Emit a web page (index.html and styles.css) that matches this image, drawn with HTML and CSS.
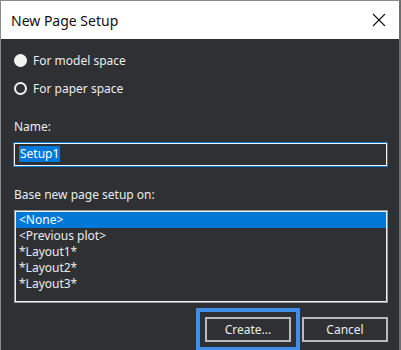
FILE: index.html
```html
<!DOCTYPE html>
<html lang="en">

<head>
    <meta charset="UTF-8">
    <title>New Page Setup</title>
    <link rel="stylesheet" href="styles.css">
</head>

<body>

    <div class="dialog">
        <header class="titlebar">
            <span class="title">New Page Setup</span>
            <svg class="close" width="14" height="14" viewBox="0 0 14 14">
                <path d="M1 1 L13 13 M13 1 L1 13" stroke="#111" stroke-width="1.1" fill="none" />
            </svg>
        </header>

        <main class="content">
            <div class="radio_row">
                <span class="radio checked"></span>
                <span>For model space</span>
            </div>
            <div class="radio_row">
                <span class="radio"></span>
                <span>For paper space</span>
            </div>

            <p class="label name_label">Name:</p>
            <div class="textbox"><span class="selected_text">Setup1</span></div>

            <p class="label base_label">Base new page setup on:</p>
            <ul class="listbox">
                <li class="valgt">&lt;None&gt;</li>
                <li>&lt;Previous plot&gt;</li>
                <li>*Layout1*</li>
                <li>*Layout2*</li>
                <li>*Layout3*</li>
            </ul>

            <div class="buttons">
                <button class="focus">Create...</button>
                <button>Cancel</button>
            </div>
        </main>
    </div>

</body></html>
```
FILE: styles.css
```css
* {
    box-sizing: border-box;
}

body {
    margin: 0;
    background-color: #2e3034;
    font-family: "Noto Sans", "Open Sans", sans-serif;
    font-size: 12px;
    color: #ececec;
}

.dialog {
    width: 401px;
    height: 350px;
    border-left: 1px solid #8a8a8a;
    border-top: 1px solid #8a8a8a;
    border-right: 2px solid #6e6e6e;
    background-color: #2e3034;
    overflow: hidden;
}

.titlebar {
    display: flex;
    justify-content: space-between;
    align-items: center;
    height: 38px;
    padding-left: 10px;
    padding-right: 13px;
    background-color: white;
    color: #111;
}

.title {
    font-size: 14px;
}

.content {
    padding: 7px 11px 0 12px;
}

.radio_row {
    display: flex;
    align-items: center;
    gap: 6px;
    height: 28px;
    padding-left: 1px;
}

.radio {
    width: 13px;
    height: 13px;
    border-radius: 50%;
    border: 2px solid #f2f2f2;
}

.radio.checked {
    background-color: #f2f2f2;
}

.label {
    margin: 0;
    height: 16px;
    line-height: 16px;
    padding-left: 1px;
}

.name_label {
    margin-top: 17px;
}

.textbox {
    margin-top: 7px;
    height: 25px;
    border: 1px solid #0078d7;
    box-shadow: inset 0 0 0 1px #f4f4f4;
    padding: 2px 0 0 5px;
}

.selected_text {
    display: inline-block;
    background-color: #0078d7;
    color: white;
    line-height: 16px;
    padding: 0 1px;
}

.base_label {
    margin-top: 20px;
}

.listbox {
    list-style: none;
    margin: 7px 0 0 1px;
    padding: 1px 1px;
    height: 93px;
    border: 1px solid #9a9a9a;
    box-shadow: inset 0 0 0 1px #f0f0f0;
}

.listbox li {
    height: 16px;
    line-height: 16px;
    padding-left: 3px;
}

.listbox .valgt {
    background-color: #0078d7;
    color: white;
}

.buttons {
    display: flex;
    justify-content: flex-end;
    gap: 11px;
    margin-top: 14px;
    padding-right: 0;
}

button {
    width: 86px;
    height: 25px;
    border: 2px solid #b9b9b9;
    background-color: #2e3034;
    color: #ececec;
    font-family: "Noto Sans", "Open Sans", sans-serif;
    font-size: 12px;
    padding: 0;
}

button.focus {
    width: 86px;
    outline: 4px solid #3f8fe8;
    outline-offset: 5px;
}
```
